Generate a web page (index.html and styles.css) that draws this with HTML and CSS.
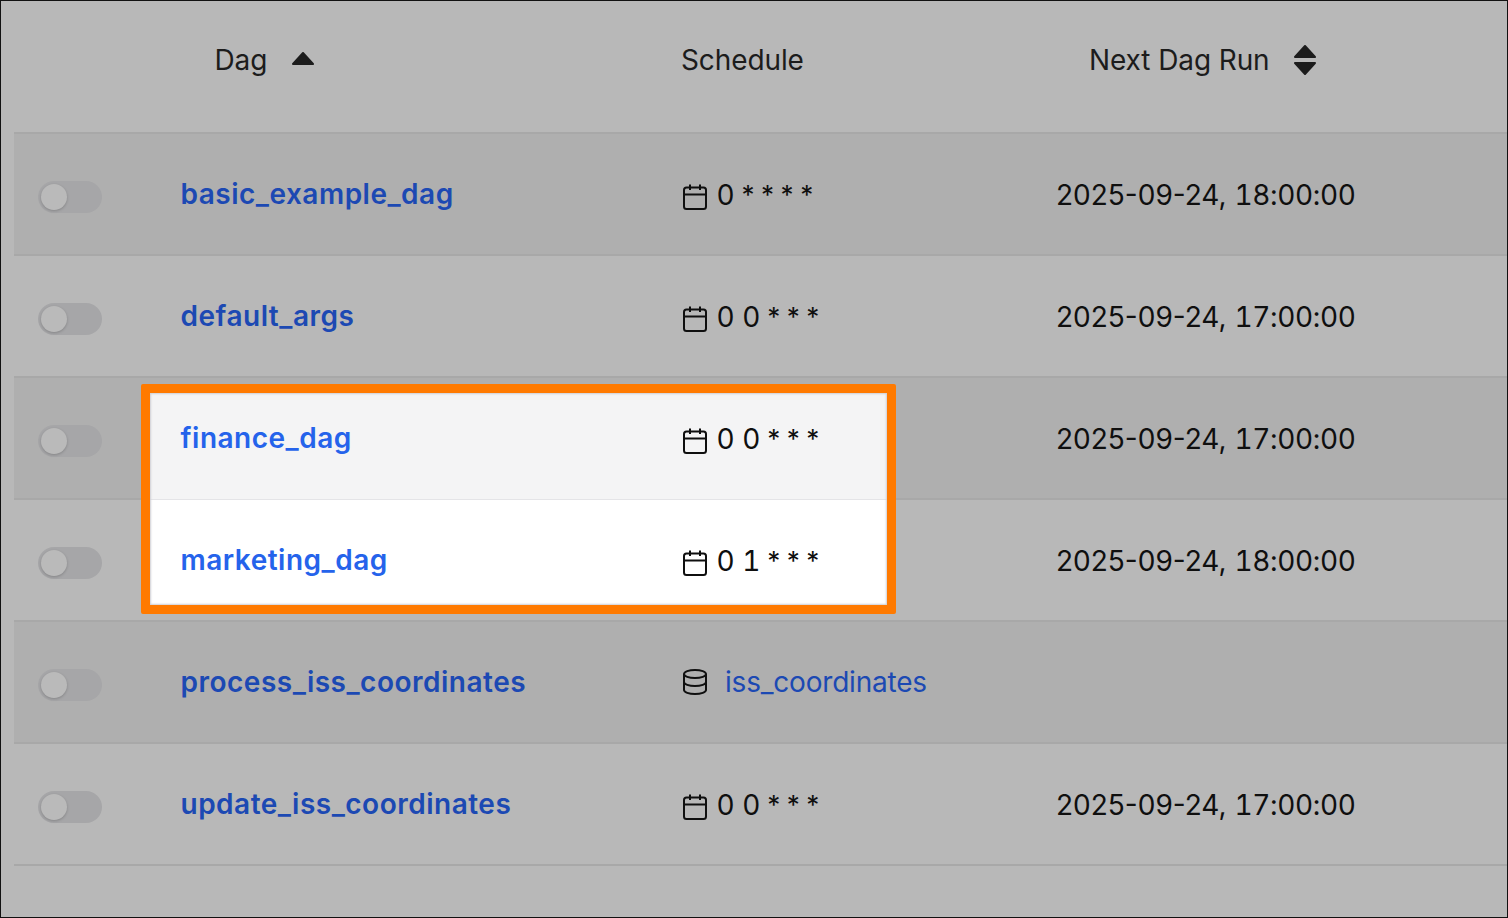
FILE: index.html
```html
<!DOCTYPE html>
<html lang="en">
<head>
    <meta charset="UTF-8">
    <title>Dags</title>
    <link rel="stylesheet" href="styles.css">
</head>
<body>
    <div class="frame">
        <svg class="icon-defs" width="0" height="0">
            <symbol id="calendar" viewBox="0 0 24 26">
                <rect x="1" y="3.5" width="22" height="21.5" rx="2.5" fill="none" stroke="currentColor" stroke-width="2"/>
                <path d="M1 10.5H23M7 .5V6M17 .5V6" fill="none" stroke="currentColor" stroke-width="2"/>
            </symbol>
            <symbol id="database" viewBox="0 0 24 26">
                <ellipse cx="12" cy="5" rx="11" ry="4" fill="none" stroke="currentColor" stroke-width="2"/>
                <path d="M1 5V21C1 23.2 6 25 12 25S23 23.2 23 21V5M1 13C1 15.2 6 17 12 17S23 15.2 23 13" fill="none" stroke="currentColor" stroke-width="2"/>
            </symbol>
        </svg>

        <div class="table">
            <div class="row head">
                <div class="col-toggle"></div>
                <div class="col-dag">
                    <span class="head-label">Dag</span>
                    <svg class="sort-up" width="22" height="13" viewBox="0 0 22 13"><path d="M11 1 21 12H1Z" fill="currentColor" stroke="currentColor" stroke-width="2" stroke-linejoin="round"/></svg>
                </div>
                <div class="col-schedule">Schedule</div>
                <div class="col-next">
                    <span class="head-label">Next Dag Run</span>
                    <svg class="sort-both" width="22" height="30" viewBox="0 0 22 30"><path d="M11 1 21 12H1ZM1 18H21L11 29Z" fill="currentColor" stroke="currentColor" stroke-width="2" stroke-linejoin="round"/></svg>
                </div>
            </div>

            <div class="row">
                <div class="col-toggle"><span class="toggle"></span></div>
                <div class="col-dag"><a class="dag-link" href="#">basic_example_dag</a></div>
                <div class="col-schedule"><svg class="ico"><use href="#calendar"/></svg><span class="cron"><span class="nums">0</span> <span class="stars">* * * *</span></span></div>
                <div class="col-next"><span>2025-09-24, <span class="nums time">18:00:00</span></span></div>
            </div>
            <div class="row">
                <div class="col-toggle"><span class="toggle"></span></div>
                <div class="col-dag"><a class="dag-link" href="#">default_args</a></div>
                <div class="col-schedule"><svg class="ico"><use href="#calendar"/></svg><span class="cron"><span class="nums">0 0</span> <span class="stars">* * *</span></span></div>
                <div class="col-next"><span>2025-09-24, <span class="nums time">17:00:00</span></span></div>
            </div>
            <div class="row">
                <div class="col-toggle"><span class="toggle"></span></div>
                <div class="col-dag"></div>
                <div class="col-schedule"></div>
                <div class="col-next"><span>2025-09-24, <span class="nums time">17:00:00</span></span></div>
            </div>
            <div class="row">
                <div class="col-toggle"><span class="toggle"></span></div>
                <div class="col-dag"></div>
                <div class="col-schedule"></div>
                <div class="col-next"><span>2025-09-24, <span class="nums time">18:00:00</span></span></div>
            </div>
            <div class="row">
                <div class="col-toggle"><span class="toggle"></span></div>
                <div class="col-dag"><a class="dag-link" href="#">process_iss_coordinates</a></div>
                <div class="col-schedule"><svg class="ico ico-db"><use href="#database"/></svg><a class="dataset-link" href="#">iss_coordinates</a></div>
                <div class="col-next"></div>
            </div>
            <div class="row">
                <div class="col-toggle"><span class="toggle"></span></div>
                <div class="col-dag"><a class="dag-link" href="#">update_iss_coordinates</a></div>
                <div class="col-schedule"><svg class="ico"><use href="#calendar"/></svg><span class="cron"><span class="nums">0 0</span> <span class="stars">* * *</span></span></div>
                <div class="col-next"><span>2025-09-24, <span class="nums time">17:00:00</span></span></div>
            </div>
        </div>

        <!-- orange callout that sits over the two rows -->
        <div class="callout">
            <div class="callout-row first">
                <div class="callout-dag"><a class="dag-link" href="#">finance_dag</a></div>
                <div class="col-schedule"><svg class="ico"><use href="#calendar"/></svg><span class="cron"><span class="nums">0 0</span> <span class="stars">* * *</span></span></div>
            </div>
            <div class="callout-row second">
                <div class="callout-dag"><a class="dag-link" href="#">marketing_dag</a></div>
                <div class="col-schedule"><svg class="ico"><use href="#calendar"/></svg><span class="cron"><span class="nums">0 1</span> <span class="stars">* * *</span></span></div>
            </div>
        </div>
    </div>
</body>
</html>
```

FILE: styles.css
```css
* {
    box-sizing: border-box;
}
html, body {
    margin: 0;
    height: 100%;
}
body {
    font-family: Inter, "Liberation Sans", sans-serif;
    font-size: 28px;
    color: #0f0f0f;
    overflow: hidden;
}
.frame {
    position: relative;
    height: 918px;
    padding: 0 0 0 13px;
    background-color: #b8b8b8;
    border: 1px solid #111;
}
.icon-defs {
    position: absolute;
}
.row {
    display: flex;
    height: 122px;
    padding-top: 44px;
    border-bottom: 2px solid #a8a8a8;
    line-height: 34px;
}
.row:nth-child(even) {
    background-color: #afafaf;
}
.row.head {
    height: 134px;
    margin-top: -1px;
    padding-top: 43px;
    color: #1c1c1c;
    letter-spacing: -0.1px;
}
.col-toggle {
    width: 166px;
    flex: none;
}
.col-dag {
    width: 501px;
    flex: none;
    display: flex;
}
.col-schedule {
    width: 375px;
    flex: none;
    display: flex;
}
.col-next {
    flex: 1;
    display: flex;
}
.head .col-dag {
    padding-left: 34.5px;
}
.head .col-next {
    padding-left: 33px;
}
.sort-up {
    margin: 9px 0 0 25px;
}
.sort-both {
    margin: 2px 0 0 24px;
}
.toggle {
    display: block;
    position: relative;
    width: 64px;
    height: 32px;
    margin: 3px 0 0 24px;
    border-radius: 16px;
    background-color: #a6a6a8;
}
.toggle::after {
    content: "";
    position: absolute;
    left: 3px;
    top: 3px;
    width: 26px;
    height: 26px;
    border-radius: 50%;
    background-color: #bababa;
    box-shadow: 0 1px 3px rgba(0, 0, 0, 0.2);
}
.dag-link {
    margin: -1px 0 0 0.5px;
    color: #1c49b3;
    font-weight: 600;
    letter-spacing: 0.5px;
    text-decoration: none;
}
.dataset-link {
    margin-top: -1px;
    color: #1c49b3;
    letter-spacing: -0.2px;
    text-decoration: none;
}
.nums {
    font-variant-numeric: tabular-nums;
}
.time {
    letter-spacing: -0.35px;
}
.stars {
    margin-left: -1px;
    font-size: 26px;
    letter-spacing: -0.4px;
    vertical-align: 1px;
}
.ico {
    width: 24px;
    height: 26px;
    margin: 6px 9.5px 0 2px;
    flex: none;
}
.ico-db {
    margin: 3px 18px 0 2px;
}
.callout {
    position: absolute;
    left: 140px;
    top: 383px;
    width: 755px;
    height: 230px;
    border: 9px solid #ff7a00;
    border-radius: 2px;
    background-color: #fff;
    line-height: 34px;
}
.callout::after {
    content: "";
    position: absolute;
    inset: 0;
    box-shadow: inset 0 0 2px 1px #cfcfd4;
    pointer-events: none;
}
.callout-row {
    display: flex;
}
.callout-row.first {
    height: 107px;
    padding-top: 29px;
    background-color: #f4f4f5;
    border-bottom: 1px solid #e4e4e7;
}
.callout-row.second {
    padding-top: 44px;
}
.callout-dag {
    display: flex;
    width: 531px;
    padding-left: 30px;
    flex: none;
}
.callout .dag-link {
    color: #2563eb;
}
```
